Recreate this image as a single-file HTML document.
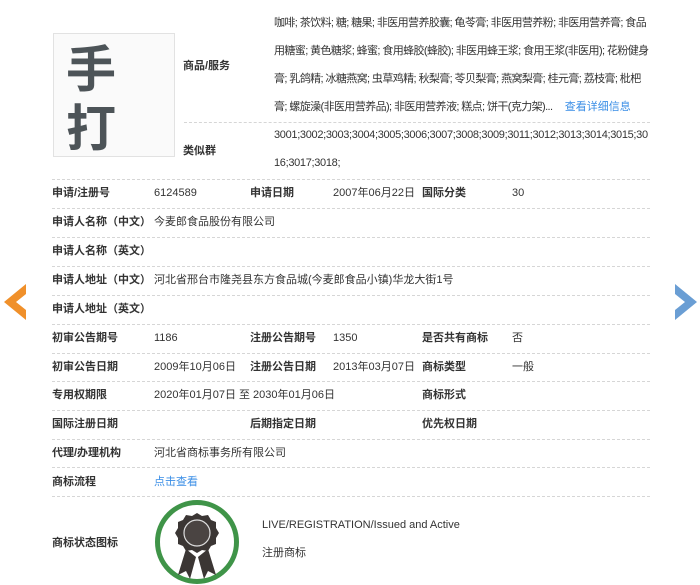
<!DOCTYPE html>
<html><head><meta charset="utf-8"><style>
*{margin:0;padding:0;box-sizing:border-box}
body{width:700px;height:584px;background:#fff;position:relative;overflow:hidden;font-family:"Liberation Sans","Noto Sans CJK SC",sans-serif;font-size:11px;color:#333}
.a{position:absolute;white-space:nowrap;line-height:14px}
.b{font-weight:bold;color:#333}
.l{position:absolute;left:52px;width:598px;border-top:1px dashed #d6d6d6;height:0}
.blue{color:#3a8ee6}
.t{letter-spacing:-0.6px}
</style></head><body>
<div style="position:absolute;left:53px;top:33px;width:122px;height:124px;border:1px solid #e2e2e2;background:#fafafa"></div>
<div class="a" style="left:66px;top:38px;font-size:50px;line-height:56px;color:#4d5458;font-family:'Noto Sans CJK SC',sans-serif;font-weight:bold">手</div>
<div class="a" style="left:66px;top:97px;font-size:50px;line-height:56px;color:#4d5458;font-family:'Noto Sans CJK SC',sans-serif;font-weight:bold">打</div>
<div class="a b" style="left:183px;top:59px">商品/服务</div>
<div class="a t" style="left:274px;top:16px">咖啡; 茶饮料; 糖; 糖果; 非医用营养胶囊; 龟苓膏; 非医用营养粉; 非医用营养膏; 食品</div>
<div class="a t" style="left:274px;top:44px">用糖蜜; 黄色糖浆; 蜂蜜; 食用蜂胶(蜂胶); 非医用蜂王浆; 食用王浆(非医用); 花粉健身</div>
<div class="a t" style="left:274px;top:72px">膏; 乳鸽精; 冰糖燕窝; 虫草鸡精; 秋梨膏; 苓贝梨膏; 燕窝梨膏; 桂元膏; 荔枝膏; 枇杷</div>
<div class="a t" style="left:274px;top:100px">膏; 螺旋澡(非医用营养品); 非医用营养液; 糕点; 饼干(克力架)... &nbsp;&nbsp;&nbsp; <span class="blue" style="letter-spacing:0">查看详细信息</span></div>
<div class="l" style="left:184px;width:466px;top:122px"></div>
<div class="a b" style="left:183px;top:144px">类似群</div>
<div class="a" style="left:274px;top:128px;letter-spacing:-0.32px">3001;3002;3003;3004;3005;3006;3007;3008;3009;3011;3012;3013;3014;3015;30</div>
<div class="a" style="left:274px;top:156px;letter-spacing:-0.32px">16;3017;3018;</div>
<div class="l" style="top:179px"></div>

<div class="a b" style="left:52px;top:186px">申请/注册号</div><div class="a" style="left:154px;top:186px">6124589</div>
<div class="a b" style="left:250px;top:186px">申请日期</div><div class="a" style="left:333px;top:186px">2007年06月22日</div>
<div class="a b" style="left:422px;top:186px">国际分类</div><div class="a" style="left:512px;top:186px">30</div>
<div class="l" style="top:208px"></div>
<div class="a b" style="left:52px;top:215px">申请人名称（中文）</div><div class="a" style="left:154px;top:215px">今麦郎食品股份有限公司</div>
<div class="l" style="top:237px"></div>
<div class="a b" style="left:52px;top:244px">申请人名称（英文）</div>
<div class="l" style="top:266px"></div>
<div class="a b" style="left:52px;top:273px">申请人地址（中文）</div><div class="a" style="left:154px;top:273px">河北省邢台市隆尧县东方食品城(今麦郎食品小镇)华龙大街1号</div>
<div class="l" style="top:295px"></div>
<div class="a b" style="left:52px;top:302px">申请人地址（英文）</div>
<div class="l" style="top:324px"></div>
<div class="a b" style="left:52px;top:331px">初审公告期号</div><div class="a" style="left:154px;top:331px">1186</div>
<div class="a b" style="left:250px;top:331px">注册公告期号</div><div class="a" style="left:333px;top:331px">1350</div>
<div class="a b" style="left:422px;top:331px">是否共有商标</div><div class="a" style="left:512px;top:331px">否</div>
<div class="l" style="top:353px"></div>
<div class="a b" style="left:52px;top:360px">初审公告日期</div><div class="a" style="left:154px;top:360px">2009年10月06日</div>
<div class="a b" style="left:250px;top:360px">注册公告日期</div><div class="a" style="left:333px;top:360px">2013年03月07日</div>
<div class="a b" style="left:422px;top:360px">商标类型</div><div class="a" style="left:512px;top:360px">一般</div>
<div class="l" style="top:381px"></div>
<div class="a b" style="left:52px;top:388px">专用权期限</div><div class="a" style="left:154px;top:388px">2020年01月07日 至 2030年01月06日</div>
<div class="a b" style="left:422px;top:388px">商标形式</div>
<div class="l" style="top:410px"></div>
<div class="a b" style="left:52px;top:417px">国际注册日期</div>
<div class="a b" style="left:250px;top:417px">后期指定日期</div>
<div class="a b" style="left:422px;top:417px">优先权日期</div>
<div class="l" style="top:439px"></div>
<div class="a b" style="left:52px;top:446px">代理/办理机构</div><div class="a" style="left:154px;top:446px">河北省商标事务所有限公司</div>
<div class="l" style="top:467px"></div>
<div class="a b" style="left:52px;top:475px">商标流程</div><div class="a blue" style="left:154px;top:475px">点击查看</div>
<div class="l" style="top:496px"></div>
<div class="a b" style="left:52px;top:536px">商标状态图标</div>
<svg style="position:absolute;left:154px;top:499px" width="88" height="86" viewBox="0 0 88 86">
<circle cx="43" cy="43" r="39.5" fill="#fff" stroke="#3f9448" stroke-width="5"/>
<path d="M32 50 L24 76 L32 72 L36 80 L42 58 Z" fill="#3b3634"/>
<path d="M54 50 L62 76 L54 72 L50 80 L44 58 Z" fill="#3b3634"/>
<path d="M43 14 L48 17 L54 16 L57 21 L62 23 L62 29 L65 34 L62 39 L62 45 L57 47 L54 52 L48 51 L43 54 L38 51 L32 52 L29 47 L24 45 L24 39 L21 34 L24 29 L24 23 L29 21 L32 16 L38 17 Z" fill="#3b3634"/>
<circle cx="43" cy="34" r="13" fill="#4a4442" stroke="#ddd" stroke-width="1.2"/>
</svg>
<div class="a" style="left:262px;top:518px">LIVE/REGISTRATION/Issued and Active</div>
<div class="a" style="left:262px;top:546px">注册商标</div>
<svg style="position:absolute;left:4px;top:284px" width="26" height="36"><path d="M22 0 L0 18 L22 36 L22 26 L12 18 L22 10 Z" fill="#f0902a"/></svg>
<svg style="position:absolute;left:671px;top:284px" width="26" height="36"><path d="M4 0 L26 18 L4 36 L4 26 L14 18 L4 10 Z" fill="#6a9ed4"/></svg>
</body></html>
